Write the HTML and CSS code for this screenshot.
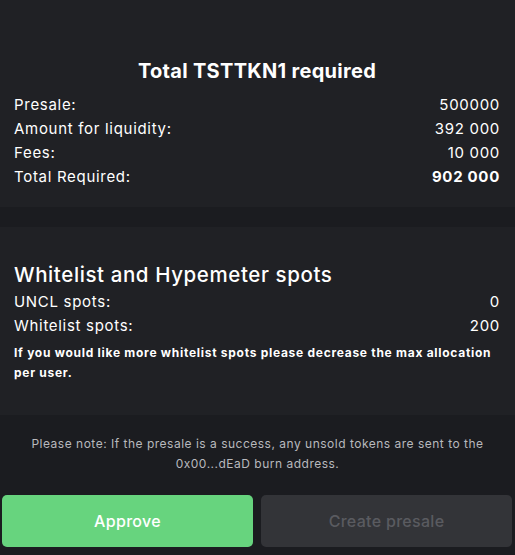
FILE: index.html
```
<!DOCTYPE html>
<html>
<head>
<meta charset="utf-8">
<link rel="stylesheet" href="styles.css">
</head>
<body>
<div class="page">
  <section class="card card-total">
    <h2 class="title">Total TSTTKN1 required</h2>
    <div class="row"><span>Presale:</span><span>500000</span></div>
    <div class="row"><span>Amount for liquidity:</span><span>392 000</span></div>
    <div class="row"><span>Fees:</span><span>10 000</span></div>
    <div class="row"><span>Total Required:</span><span class="strong">902 000</span></div>
  </section>
  <section class="card card-spots">
    <h3 class="subtitle">Whitelist and Hypemeter spots</h3>
    <div class="row"><span>UNCL spots:</span><span>0</span></div>
    <div class="row"><span>Whitelist spots:</span><span>200</span></div>
    <p class="warn">If you would like more whitelist spots please decrease the max allocation per user.</p>
  </section>
  <p class="note">Please note: If the presale is a success, any unsold tokens are sent to the<br>0x00...dEaD burn address.</p>
  <div class="actions">
    <button class="btn btn-approve">Approve</button>
    <button class="btn btn-create" disabled>Create presale</button>
  </div>
</div>
</body>
</html>
```
FILE: styles.css
```
html, body {
  margin: 0;
  padding: 0;
  background: #1b1c20;
}
body {
  font-family: "Inter", "Lato", sans-serif;
  color: #ffffff;
  width: 515px;
  height: 555px;
  overflow: hidden;
}
.page {
  display: flex;
  flex-direction: column;
}
.card {
  background: #202125;
  padding: 0 15px 0 14px;
}
.card-total {
  padding-top: 57px;
  padding-bottom: 18px;
  margin-bottom: 20px;
}
.card-spots {
  padding-top: 34px;
  padding-bottom: 32px;
}
.title {
  margin: 0 0 8px 0;
  font-size: 20px;
  line-height: 28px;
  font-weight: 700;
  letter-spacing: 0.3px;
  text-align: center;
}
.subtitle {
  margin: 0 0 1px 0;
  font-size: 20.5px;
  line-height: 28px;
  font-weight: 500;
  letter-spacing: 0.6px;
}
.row {
  display: flex;
  justify-content: space-between;
  font-size: 15px;
  line-height: 24px;
  font-weight: 400;
  letter-spacing: 0.7px;
}
.strong {
  font-weight: 700;
}
.warn {
  margin: 5px -2px 0 0;
  font-size: 12px;
  line-height: 20px;
  font-weight: 700;
  letter-spacing: 0.72px;
}
.note {
  margin: 19px 0 0 0;
  font-size: 12px;
  line-height: 20px;
  color: #b8b9bd;
  text-align: center;
  letter-spacing: 0.5px;
}
.actions {
  display: flex;
  gap: 8px;
  padding: 0 3px 8px 2px;
  margin-top: 21px;
}
.btn {
  flex: 1;
  height: 52px;
  border: none;
  border-radius: 5px;
  font-family: inherit;
  font-size: 16px;
  font-weight: 500;
  letter-spacing: 0.3px;
}
.btn-approve {
  background: #67d47e;
  color: #ffffff;
}
.btn-create {
  background: #333438;
  color: #5a5b60;
}
```
